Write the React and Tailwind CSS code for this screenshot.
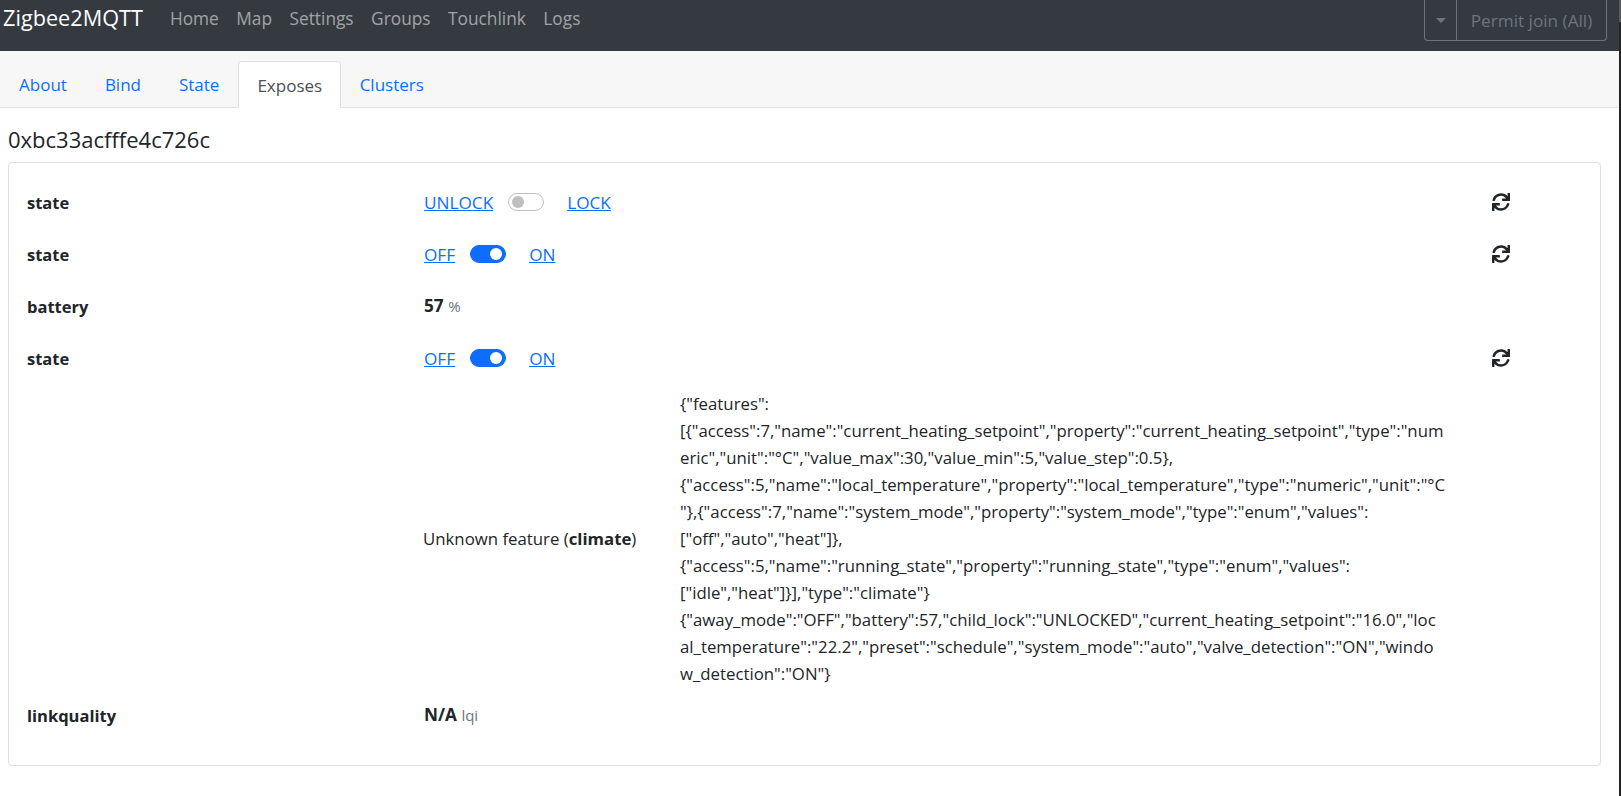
import { FaSync } from "react-icons/fa";

const jsonLines = [
  '{"features":',
  '[{"access":7,"name":"current_heating_setpoint","property":"current_heating_setpoint","type":"num',
  'eric","unit":"°C","value_max":30,"value_min":5,"value_step":0.5},',
  '{"access":5,"name":"local_temperature","property":"local_temperature","type":"numeric","unit":"°C',
  '"},{"access":7,"name":"system_mode","property":"system_mode","type":"enum","values":',
  '["off","auto","heat"]},',
  '{"access":5,"name":"running_state","property":"running_state","type":"enum","values":',
  '["idle","heat"]}],"type":"climate"}',
  '{"away_mode":"OFF","battery":57,"child_lock":"UNLOCKED","current_heating_setpoint":"16.0","loc',
  'al_temperature":"22.2","preset":"schedule","system_mode":"auto","valve_detection":"ON","windo',
  'w_detection":"ON"}',
];

function Toggle({ on }) {
  return (
    <span className={`ml-[15px] mr-[14px] flex h-[18px] w-9 items-center rounded-full border px-[3px] ${on ? "justify-end border-[#0d6efd] bg-[#0d6efd]" : "justify-start border-[#bfbfbf] bg-white"}`}>
      <span className={`h-3 w-3 rounded-full ${on ? "bg-white" : "bg-[#bfbfbf]"}`}></span>
    </span>
  );
}

function SwitchRow({ off, on, checked }) {
  return (
    <div className="flex h-[52px] items-center">
      <div className="w-[397px] text-[16.5px] font-bold">state</div>
      <div className="flex flex-1 items-center text-[17.2px]">
        <a className="text-[#0d6efd] underline">{off}</a>
        <Toggle on={checked} />
        <span className="w-[9px]"></span>
        <a className="text-[#0d6efd] underline">{on}</a>
      </div>
      <FaSync className="mr-[72px] text-[18px] text-[#212529]" />
    </div>
  );
}

function ValueRow({ label, value, unit }) {
  return (
    <div className="flex h-[52px] items-center">
      <div className="w-[397px] text-[16.5px] font-bold">{label}</div>
      <div className="text-[17.2px]"><b>{value}</b> <small className="text-[15px] text-[#6c757d]">{unit}</small></div>
    </div>
  );
}

export default function App() {
  return (
    <div className="flex h-[796px] overflow-hidden bg-white font-['Open_Sans','Noto_Sans',sans-serif] text-[16.8px] leading-[27px] text-[#212529]">
      <div className="min-w-0 flex-1">
        <nav className="flex h-[51px] items-start bg-[#343a40]">
          <a className="ml-[3px] mt-[3px] text-[21.7px] leading-[30px] text-white">Zigbee2MQTT</a>
          <div className="ml-[27px] mt-[5px] flex gap-[17.5px] text-[17.3px] text-[rgba(255,255,255,0.55)]">
            <a>Home</a>
            <a>Map</a>
            <a>Settings</a>
            <a>Groups</a>
            <a>Touchlink</a>
            <a>Logs</a>
          </div>
          <div className="ml-auto mr-[12px] flex h-[41px] w-[183px] rounded-b border border-t-0 border-[#6c757d] text-[17.2px] text-[#6c757d]">
            <span className="flex w-[32px] items-center justify-center border-r border-[#6c757d]">
              <span className="h-0 w-0 border-x-[5px] border-t-[5px] border-x-transparent border-t-[#6c757d]"></span>
            </span>
            <span className="flex flex-1 items-center justify-center">Permit join (All)</span>
          </div>
        </nav>
        <div className="flex h-[57px] items-end border-b border-[#dee2e6] bg-[#f7f7f7] text-[17px]">
          <a className="mb-[-1px] flex h-[47px] items-center px-[19px] text-[#0d6efd]">About</a>
          <a className="mb-[-1px] flex h-[47px] items-center px-[19px] text-[#0d6efd]">Bind</a>
          <a className="mb-[-1px] flex h-[47px] items-center px-[19px] text-[#0d6efd]">State</a>
          <a className="mb-[-1px] flex h-[47px] items-center rounded-t border border-b-0 border-[#dee2e6] bg-white px-[18px] text-[#495057]">Exposes</a>
          <a className="mb-[-1px] flex h-[47px] items-center px-[18.5px] text-[#0d6efd]">Clusters</a>
        </div>
        <h5 className="ml-2 mt-4 text-[22px] leading-[30px]">0xbc33acfffe4c726c</h5>
        <div className="ml-2 mr-[18px] mt-2 rounded border border-[#dfdfdf] px-[18px] pb-[24px] pt-[13px]">
          <SwitchRow off="UNLOCK" on="LOCK" />
          <SwitchRow off="OFF" on="ON" checked />
          <ValueRow label="battery" value="57" unit="%" />
          <SwitchRow off="OFF" on="ON" checked />
          <div className="flex items-center pb-[2px] pt-[6px]">
            <div className="ml-[396px] w-[253px]">
              Unknown feature (<b>climate</b>)
            </div>
            <div className="whitespace-nowrap pl-[4px]">
              {jsonLines.map((line) => (
                <div key={line}>{line}</div>
              ))}
            </div>
          </div>
          <ValueRow label="linkquality" value="N/A" unit="lqi" />
        </div>
      </div>
      {/* sliver of the window's scrollbar */}
      <div className="w-[2px] shrink-0 bg-[#242424]">
        <div className="h-[22px] bg-[#5a5a5a]"></div>
      </div>
    </div>
  );
}
